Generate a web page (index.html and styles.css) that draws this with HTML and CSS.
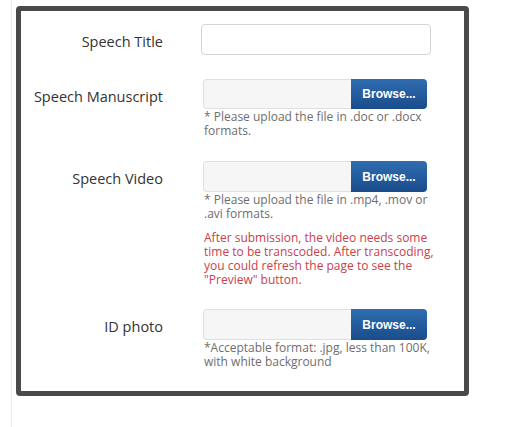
FILE: index.html
```html
<!DOCTYPE html>
<html lang="en">
<head>
  <meta charset="UTF-8">
  <title>Speech Submission</title>
  <link rel="stylesheet" href="styles.css">
</head>
<body>
  <div class="page">
    <form class="panel">
      <div class="form-row title-row">
        <label class="form-label" for="speechTitle">Speech Title</label>
        <div class="form-control">
          <input type="text" id="speechTitle" class="text-input">
        </div>
      </div>

      <div class="form-row manuscript-row">
        <label class="form-label">Speech Manuscript</label>
        <div class="form-control">
          <div class="file-group">
            <span class="file-name"></span>
            <span class="browse-button">Browse...</span>
          </div>
          <p class="help">* Please upload the file in .doc or .docx formats.</p>
        </div>
      </div>

      <div class="form-row video-row">
        <label class="form-label">Speech Video</label>
        <div class="form-control">
          <div class="file-group">
            <span class="file-name"></span>
            <span class="browse-button">Browse...</span>
          </div>
          <p class="help">* Please upload the file in .mp4, .mov or .avi formats.</p>
          <p class="help warning">After submission, the video needs some time to be transcoded. After transcoding, you could refresh the page to see the "Preview" button.</p>
        </div>
      </div>

      <div class="form-row photo-row">
        <label class="form-label">ID photo</label>
        <div class="form-control">
          <div class="file-group">
            <span class="file-name"></span>
            <span class="browse-button">Browse...</span>
          </div>
          <p class="help">*Acceptable format: .jpg, less than 100K, with white background</p>
        </div>
      </div>
    </form>
  </div>
</body>
</html>
```

FILE: styles.css
```css
body {
  margin: 0;
  background: #fff;
  font-family: "Open Sans", "Noto Sans", sans-serif;
  color: #333;
}
.page {
  margin-left: 11px;
  border-left: 1px solid #ececec;
  min-height: 427px;
  padding: 6px 0 0 4px;
  box-sizing: border-box;
}
.panel {
  width: 453px;
  box-sizing: border-box;
  border: 5px solid #4a4a4a;
  border-radius: 4px;
  padding: 13px 0 22px 0;
  margin: 0;
}
.form-row {
  display: grid;
  grid-template-columns: 142px 230px;
  column-gap: 38px;
  align-items: start;
}
.title-row { margin-bottom: 24px; }
.manuscript-row { margin-bottom: 23px; }
.video-row { margin-bottom: 22px; }
.form-label {
  text-align: right;
  font-size: 14.5px;
  line-height: 27px;
  padding-top: 4px;
  color: #333;
}
.text-input {
  display: block;
  width: 230px;
  height: 31px;
  box-sizing: border-box;
  border: 1px solid #d4d4d4;
  border-radius: 4px;
  background: #fff;
  margin: 0;
}
.file-group {
  display: flex;
  width: 224px;
  height: 31px;
  margin-left: 2px;
}
.manuscript-row .file-group { height: 30px; }
.file-name {
  flex: 1;
  background: #f6f6f6;
  border: 1px solid #e0e0e0;
  border-right: none;
  border-radius: 4px 0 0 4px;
}
.browse-button {
  width: 76px;
  display: flex;
  align-items: center;
  justify-content: center;
  background: linear-gradient(#2f6db1, #1a4c8b);
  border-radius: 0 4px 4px 0;
  color: #fff;
  font-family: "Liberation Sans", Arial, sans-serif;
  font-weight: bold;
  font-size: 12px;
}
.help {
  margin: 1px 0 0 3px;
  width: 230px;
  font-size: 12px;
  line-height: 14px;
  color: #6e6e6e;
}
.warning {
  margin-top: 10px;
  color: #c9414c;
}
```
